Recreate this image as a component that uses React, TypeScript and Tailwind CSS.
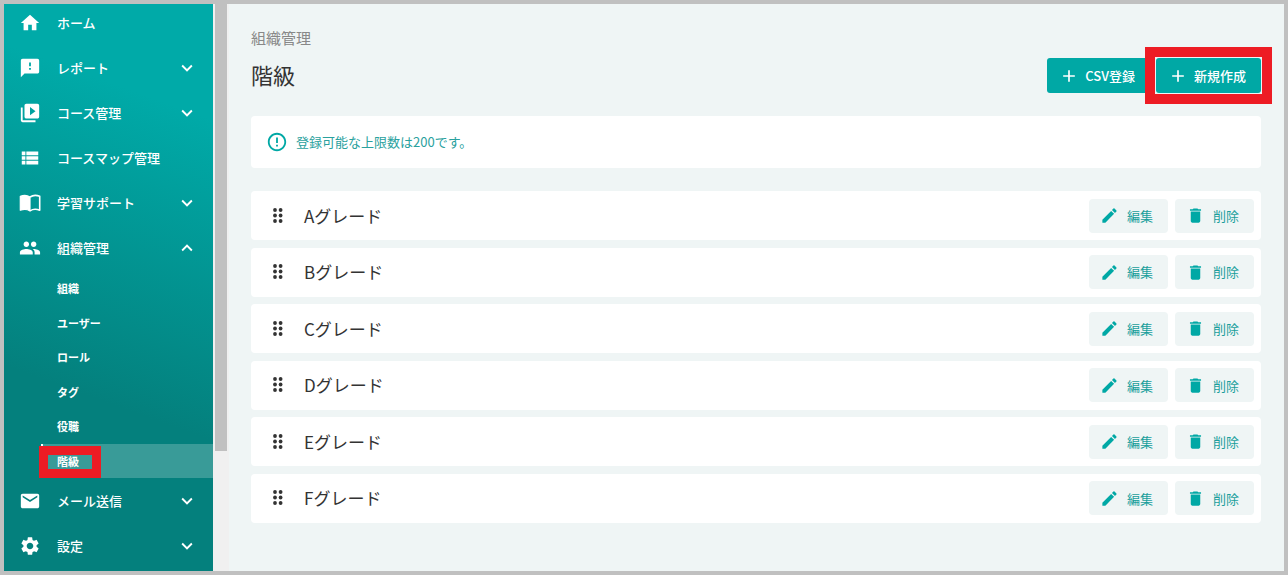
import type { ReactNode } from "react";
import {
  MdAdd,
  MdDelete,
  MdEdit,
  MdErrorOutline,
  MdExpandLess,
  MdExpandMore,
  MdFeedback,
  MdHome,
  MdMail,
  MdPeople,
  MdSettings,
  MdVideoLibrary,
  MdViewList,
} from "react-icons/md";

const subItems = ["組織", "ユーザー", "ロール", "タグ", "役職", "階級"];
const grades = ["A", "B", "C", "D", "E", "F"];

function BookIcon() {
  return (
    <svg viewBox="0 0 22 18" className="h-[18px] w-[22px]" fill="none" aria-hidden="true">
      <path
        d="M11 3C8.500 1.300 4.500 1 1.300 2.300v13.900c3.200-1.200 7.200-1 9.700.7V3Z"
        fill="currentColor"
        stroke="currentColor"
        strokeWidth="1.200"
        strokeLinejoin="round"
      />
      <path
        d="M11 3c2.500-1.700 6.500-2 9.700-.7v13.900c-3.200-1.200-7.200-1-9.700.7"
        stroke="currentColor"
        strokeWidth="1.600"
        strokeLinejoin="round"
      />
    </svg>
  );
}

function GripIcon() {
  return (
    <svg viewBox="0 0 12 16" className="h-4 w-3" fill="currentColor" aria-hidden="true">
      {[2, 7.500, 13].map((y) => (
        <g key={y}>
          <circle cx="3" cy={y} r="1.900" />
          <circle cx="8.600" cy={y} r="1.900" />
        </g>
      ))}
    </svg>
  );
}

function NavItem({
  icon,
  label,
  arrow,
  children,
}: {
  icon: ReactNode;
  label: string;
  arrow?: "down" | "up";
  children?: ReactNode;
}) {
  const inner = (
    <>
      <span className="flex w-[22px] shrink-0 justify-center">{icon}</span>
      <span className="ml-4 flex-1 text-left">{label}</span>
      {arrow === "down" && <MdExpandMore size={22} />}
      {arrow === "up" && <MdExpandLess size={22} />}
    </>
  );
  const cls = "flex h-[38px] w-full items-center px-[15px] text-[13px] font-medium";
  return (
    <li>
      {arrow ? (
        <button type="button" aria-expanded={arrow === "up"} className={cls}>
          {inner}
        </button>
      ) : (
        <a href="#" className={cls}>
          {inner}
        </a>
      )}
      {children}
    </li>
  );
}

function Sidebar() {
  return (
    <nav className="w-[209px] shrink-0 overflow-hidden bg-[linear-gradient(200deg,#00aaa8_18%,#04807d_68%)] text-white">
      <ul className="flex flex-col gap-[7px]">
        <NavItem icon={<MdHome size={22} />} label="ホーム" />
        <NavItem icon={<MdFeedback size={22} />} label="レポート" arrow="down" />
        <NavItem icon={<MdVideoLibrary size={22} />} label="コース管理" arrow="down" />
        <NavItem icon={<MdViewList size={22} />} label="コースマップ管理" />
        <NavItem icon={<BookIcon />} label="学習サポート" arrow="down" />
        <NavItem icon={<MdPeople size={22} />} label="組織管理" arrow="up">
          <ul className="-mb-[3px] mt-1 grid h-[207px] grid-rows-6 text-[11px] font-bold">
            {subItems.map((item) => {
              const active = item === "階級";
              return (
                <li key={item} className="relative flex pl-[37px]">
                  <a
                    href="#"
                    aria-current={active ? "page" : undefined}
                    className={
                      active
                        ? "flex flex-1 items-center border-l-2 border-white bg-[#399b98] pl-[14px]"
                        : "flex flex-1 items-center pl-4"
                    }
                  >
                    {item}
                  </a>
                  {active && (
                    <span className="pointer-events-none absolute bottom-0 left-[35px] h-8 w-[62px] border-9 border-[#ed1c24]" />
                  )}
                </li>
              );
            })}
          </ul>
        </NavItem>
        <NavItem icon={<MdMail size={22} />} label="メール送信" arrow="down" />
        <NavItem icon={<MdSettings size={22} />} label="設定" arrow="down" />
      </ul>
    </nav>
  );
}

function PrimaryButton({ children }: { children: ReactNode }) {
  return (
    <button
      type="button"
      className="flex h-[35px] items-center gap-[6px] rounded-[3px] bg-[#00a8a5] pl-3 pr-[15px] text-[13px] font-medium text-white"
    >
      <MdAdd size={20} />
      {children}
    </button>
  );
}

function RowButton({ icon, children }: { icon: ReactNode; children: ReactNode }) {
  return (
    <button
      type="button"
      className="flex h-[34px] w-[79px] items-center gap-2 rounded bg-[#eff5f5] pl-[11px] text-[13px] text-[#1a9f9c]"
    >
      {icon}
      {children}
    </button>
  );
}

export default function App() {
  return (
    <div className="flex min-h-screen border-4 border-[#c0c0c0] bg-[#eff5f5] font-['Noto_Sans_CJK_JP','Noto_Sans',sans-serif] text-[#333]">
      <Sidebar />
      <div className="flex w-4 shrink-0 flex-col bg-[#f0f0f0] pl-[2px] pr-[2px]">
        <div className="h-[447px] bg-[#c0c0c0]" />
      </div>
      <main className="min-w-0 flex-1 pl-[22px] pr-[23px] pt-[23px]">
        <p className="text-[15px] leading-[22px] text-[#888]">組織管理</p>
        <div className="mt-[9px] flex items-start justify-between">
          <h1 className="text-[22px] leading-8">階級</h1>
          <div className="flex gap-[6px]">
            <PrimaryButton>CSV登録</PrimaryButton>
            <div className="relative">
              <PrimaryButton>新規作成</PrimaryButton>
              <span className="pointer-events-none absolute -inset-[11px] border-10 border-[#ed1c24]" />
            </div>
          </div>
        </div>
        <div className="mt-[23px] flex h-[52px] items-center gap-2 rounded bg-white pl-[15px] text-[13px] text-[#2aa19e]">
          <MdErrorOutline size={22} color="#00a8a5" />
          登録可能な上限数は200です。
        </div>
        <ul className="mt-[23px] flex h-[332px] flex-col justify-between">
          {grades.map((grade) => (
            <li key={grade} className="flex h-[49px] items-center rounded bg-white pl-[21px] pr-[7px]">
              <GripIcon />
              <span className="ml-5 flex-1 text-[17px] leading-6">{grade}グレード</span>
              <div className="flex gap-[7px]">
                <RowButton icon={<MdEdit size={19} color="#00a8a5" />}>編集</RowButton>
                <RowButton icon={<MdDelete size={19} color="#00a8a5" />}>削除</RowButton>
              </div>
            </li>
          ))}
        </ul>
      </main>
    </div>
  );
}
